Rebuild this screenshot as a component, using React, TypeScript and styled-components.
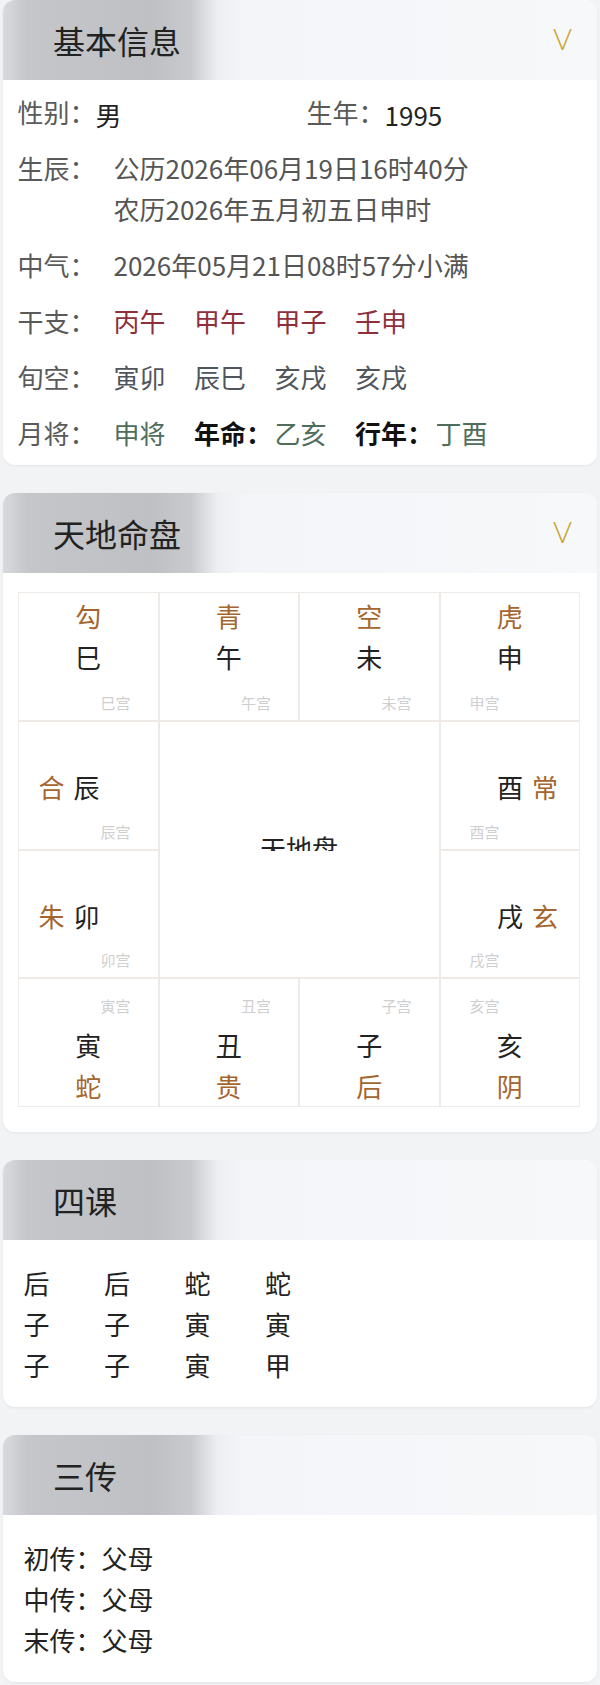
import styled, { createGlobalStyle } from "styled-components";

const GlobalStyle = createGlobalStyle`
  body {
    margin: 0;
    background: #f2f3f5;
    font-family: "Noto Sans CJK SC", "Noto Sans", sans-serif;
    color: #222;
  }
`;

const Page = styled.div`
  display: flex;
  flex-direction: column;
  gap: 28px;
  padding: 0 3px 3px;
`;

const Card = styled.section`
  background: #fff;
  border-radius: 12px;
  overflow: hidden;
  box-shadow: 0 1px 3px rgba(0, 0, 0, 0.06);
`;

const CardHeader = styled.header`
  height: 80px;
  display: flex;
  align-items: center;
  justify-content: space-between;
  padding: 0 25px 0 50px;
  background: linear-gradient(
    90deg,
    #d9dadd 0px,
    #c4c6c9 25px,
    #bec0c3 150px,
    #c8cacd 188px,
    #eceef1 214px,
    #f4f5f8 240px,
    #f7f8fa 100%
  );
`;

const HeaderTitle = styled.h2`
  margin: 0;
  font-size: 32px;
  font-weight: 400;
  color: #222;
  line-height: 1;
`;

const Chevron = styled.span`
  font-family: "Lato", "Liberation Sans", sans-serif;
  font-weight: 300;
  font-size: 29px;
  color: #c6a42e;
  line-height: 1;
  margin-top: -4px;
`;

const InfoBody = styled.div`
  display: flex;
  flex-direction: column;
  gap: 15px;
  padding: 11px 14px 12px 14.5px;
  font-size: 26px;
  line-height: 41px;
`;

const HalfRow = styled.div`
  display: grid;
  grid-template-columns: 289px 1fr;
`;

const Pair = styled.div`
  display: flex;
  align-items: flex-start;
`;

const InfoRow = styled.div`
  display: flex;
  align-items: flex-start;
`;

const Label = styled.span<{ $fixed?: boolean }>`
  color: #5a5a5a;
  flex: none;
  width: ${(p) => (p.$fixed ? "96px" : "auto")};
`;

const Strong = styled.span`
  color: #222;
  padding-top: 6px;
  line-height: 35px;
`;

const Lines = styled.div`
  display: flex;
  flex-direction: column;
  color: #555;
`;

const TokenRow = styled.div`
  display: grid;
  grid-auto-flow: column;
  grid-auto-columns: 80.5px;
  justify-content: start;
`;

const tones: Record<string, string> = {
  red: "#8e2f3c",
  slate: "#4f555c",
  green: "#4f6d5b",
  bold: "#111",
};

const Token = styled.span<{ $tone: string }>`
  color: ${(p) => tones[p.$tone]};
  font-weight: ${(p) => (p.$tone === "bold" ? 700 : 400)};
  white-space: nowrap;
`;

const PanBody = styled.div`
  padding: 19px 17px 25px 15px;
`;

const PanGrid = styled.div`
  display: grid;
  grid-template-columns: repeat(4, 1fr);
  grid-template-rows: repeat(4, 128.75px);
  font-size: 26px;
`;

const Cell = styled.div<{ $kind: "top" | "side" | "bottom" }>`
  box-sizing: border-box;
  border: 1px solid #efeae5;
  background: #fff;
  display: flex;
  flex-direction: column;
  align-items: center;
  padding-top: ${(p) => (p.$kind === "top" ? "2px" : p.$kind === "side" ? "44.5px" : "17px")};
  padding-bottom: 7px;
`;

const God = styled.span`
  color: #a5652f;
  line-height: 41px;
`;

const Branch = styled.span`
  color: #222;
  line-height: 41px;
`;

const Duo = styled.div<{ $side: "left" | "right" }>`
  display: flex;
  gap: 9px;
  align-self: stretch;
  justify-content: ${(p) => (p.$side === "left" ? "flex-start" : "flex-end")};
  padding: ${(p) => (p.$side === "left" ? "0 0 0 19.5px" : "0 21px 0 0")};
  line-height: 41px;
`;

const Palace = styled.span<{ $side: "left" | "right"; $top?: boolean }>`
  font-size: 15px;
  line-height: 20px;
  color: #cfcfcf;
  align-self: ${(p) => (p.$side === "right" ? "flex-end" : "flex-start")};
  margin: ${(p) => (p.$side === "right" ? "0 27px 0 0" : "0 0 0 29px")};
  margin-top: ${(p) => (p.$top ? "0" : "auto")};
  margin-bottom: ${(p) => (p.$top ? "7.5px" : "0")};
`;

const CenterCell = styled.div`
  grid-column: span 2;
  grid-row: span 2;
  box-sizing: border-box;
  border: 1px solid #efeae5;
  background: #fff;
`;

const CenterClip = styled.div`
  box-sizing: border-box;
  height: 129px;
  overflow: hidden;
  padding-top: 111px;
  line-height: 30px;
  text-align: center;
  color: #222;
`;

const ListBody = styled.div`
  padding: 22px 14px 22px 20.5px;
  font-size: 26px;
  line-height: 41px;
  color: #222;
`;

const ListGrid = styled.div`
  display: grid;
  grid-template-columns: repeat(4, 80.5px);
`;

const topCells = [
  { god: "勾", branch: "巳" },
  { god: "青", branch: "午" },
  { god: "空", branch: "未" },
  { god: "虎", branch: "申" },
];

const bottomCells = [
  { god: "蛇", branch: "寅" },
  { god: "贵", branch: "丑" },
  { god: "后", branch: "子" },
  { god: "阴", branch: "亥" },
];

const siKe = [
  ["后", "后", "蛇", "蛇"],
  ["子", "子", "寅", "寅"],
  ["子", "子", "寅", "甲"],
];

const sanChuan = [
  ["初传", "父母"],
  ["中传", "父母"],
  ["末传", "父母"],
];

export default function App() {
  return (
    <Page>
      <GlobalStyle />

      <Card>
        <CardHeader>
          <HeaderTitle>基本信息</HeaderTitle>
          <Chevron>V</Chevron>
        </CardHeader>
        <InfoBody>
          <HalfRow>
            <Pair>
              <Label>性别：</Label>
              <Strong>男</Strong>
            </Pair>
            <Pair>
              <Label>生年：</Label>
              <Strong>1995</Strong>
            </Pair>
          </HalfRow>
          <InfoRow>
            <Label $fixed>生辰：</Label>
            <Lines>
              <span>公历2026年06月19日16时40分</span>
              <span>农历2026年五月初五日申时</span>
            </Lines>
          </InfoRow>
          <InfoRow>
            <Label $fixed>中气：</Label>
            <Lines>
              <span>2026年05月21日08时57分小满</span>
            </Lines>
          </InfoRow>
          <InfoRow>
            <Label $fixed>干支：</Label>
            <TokenRow>
              {["丙午", "甲午", "甲子", "壬申"].map((t, i) => (
                <Token key={i} $tone="red">{t}</Token>
              ))}
            </TokenRow>
          </InfoRow>
          <InfoRow>
            <Label $fixed>旬空：</Label>
            <TokenRow>
              {["寅卯", "辰巳", "亥戌", "亥戌"].map((t, i) => (
                <Token key={i} $tone="slate">{t}</Token>
              ))}
            </TokenRow>
          </InfoRow>
          <InfoRow>
            <Label $fixed>月将：</Label>
            <TokenRow>
              <Token $tone="green">申将</Token>
              <Token $tone="bold">年命：</Token>
              <Token $tone="green">乙亥</Token>
              <Token $tone="bold">行年：</Token>
              <Token $tone="green">丁酉</Token>
            </TokenRow>
          </InfoRow>
        </InfoBody>
      </Card>

      <Card>
        <CardHeader>
          <HeaderTitle>天地命盘</HeaderTitle>
          <Chevron>V</Chevron>
        </CardHeader>
        <PanBody>
          <PanGrid>
            {topCells.map((c, i) => (
              <Cell key={c.branch} $kind="top">
                <God>{c.god}</God>
                <Branch>{c.branch}</Branch>
                <Palace $side={i === 3 ? "left" : "right"}>{c.branch}宫</Palace>
              </Cell>
            ))}

            <Cell $kind="side">
              <Duo $side="left">
                <God>合</God>
                <Branch>辰</Branch>
              </Duo>
              <Palace $side="right">辰宫</Palace>
            </Cell>
            <CenterCell>
              <CenterClip>天地盘</CenterClip>
            </CenterCell>
            <Cell $kind="side">
              <Duo $side="right">
                <Branch>酉</Branch>
                <God>常</God>
              </Duo>
              <Palace $side="left">酉宫</Palace>
            </Cell>

            <Cell $kind="side">
              <Duo $side="left">
                <God>朱</God>
                <Branch>卯</Branch>
              </Duo>
              <Palace $side="right">卯宫</Palace>
            </Cell>
            <Cell $kind="side">
              <Duo $side="right">
                <Branch>戌</Branch>
                <God>玄</God>
              </Duo>
              <Palace $side="left">戌宫</Palace>
            </Cell>

            {bottomCells.map((c, i) => (
              <Cell key={c.branch} $kind="bottom">
                <Palace $side={i === 3 ? "left" : "right"} $top>
                  {c.branch}宫
                </Palace>
                <Branch>{c.branch}</Branch>
                <God>{c.god}</God>
              </Cell>
            ))}
          </PanGrid>
        </PanBody>
      </Card>

      <Card>
        <CardHeader>
          <HeaderTitle>四课</HeaderTitle>
        </CardHeader>
        <ListBody>
          {siKe.map((row, r) => (
            <ListGrid key={r}>
              {row.map((ch, c) => (
                <span key={c}>{ch}</span>
              ))}
            </ListGrid>
          ))}
        </ListBody>
      </Card>

      <Card>
        <CardHeader>
          <HeaderTitle>三传</HeaderTitle>
        </CardHeader>
        <ListBody>
          {sanChuan.map(([k, v]) => (
            <div key={k}>
              {k}：{v}
            </div>
          ))}
        </ListBody>
      </Card>
    </Page>
  );
}
